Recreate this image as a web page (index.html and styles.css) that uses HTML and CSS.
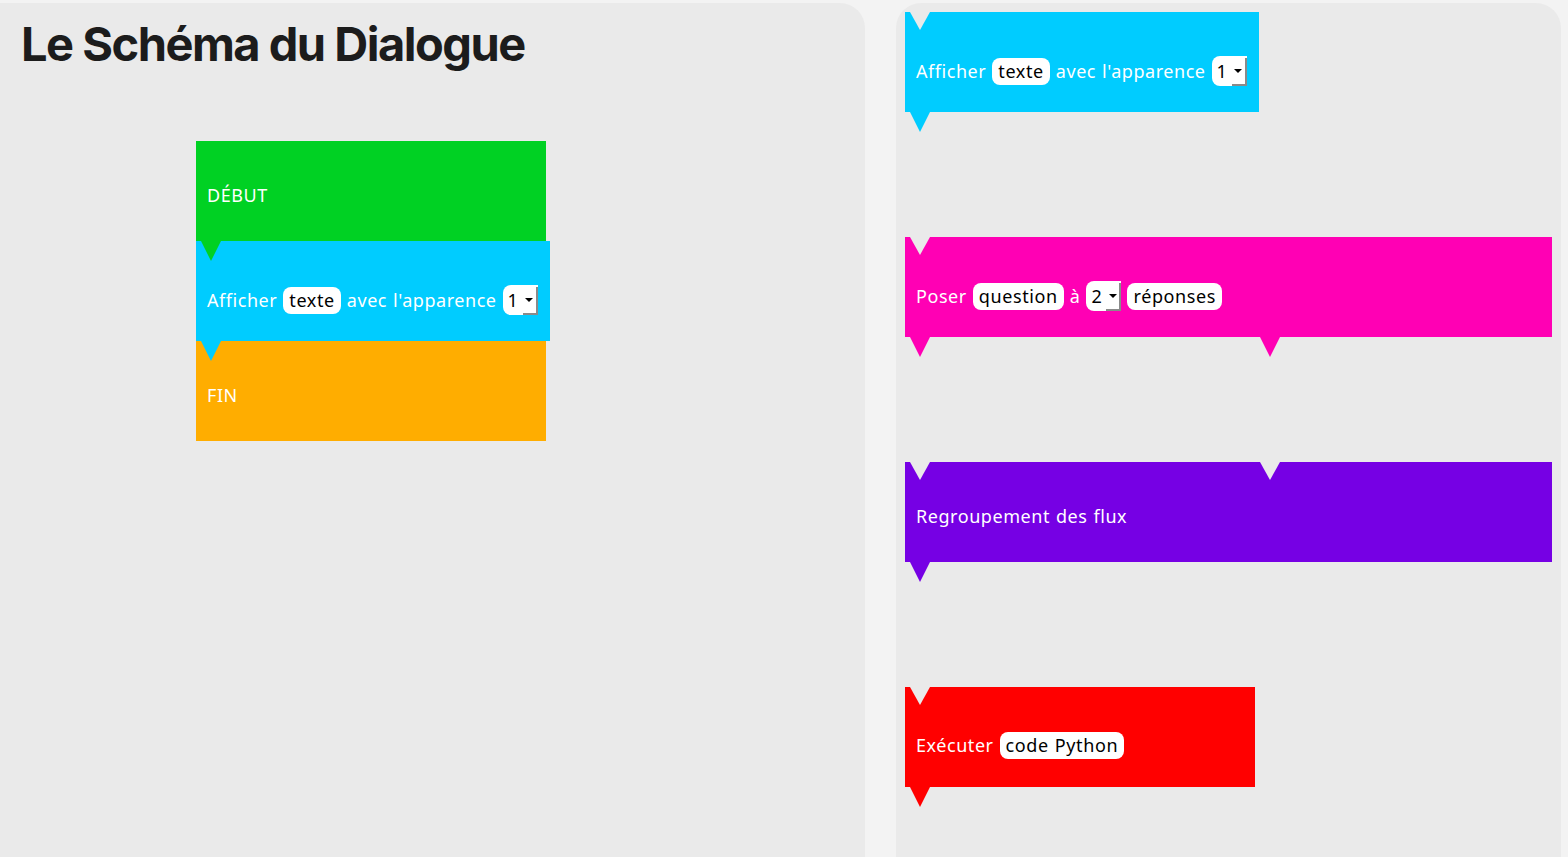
FILE: index.html
```html
<!DOCTYPE html>
<html lang="fr">
<head>
<meta charset="utf-8">
<title>Le Schéma du Dialogue</title>
<link rel="stylesheet" href="styles.css">
</head>
<body>
<div class="page">
  <section class="panel panel-left">
    <h1 class="title">Le Schéma du Dialogue</h1>
    <div class="stack">
      <div class="block green plain w350"><span class="line">DÉBUT</span></div>
      <div class="block cyan inputs w354"><span class="line">Afficher <span class="pill">texte</span> avec l'apparence <span class="sel"><span class="sel-val">1</span><span class="sel-btn"><i class="arrow"></i></span></span></span></div>
      <div class="block orange plain w350 last"><span class="line">FIN</span></div>
    </div>
  </section>
  <section class="panel panel-right">
    <div class="block cyan inputs w354 first"><span class="line">Afficher <span class="pill">texte</span> avec l'apparence <span class="sel"><span class="sel-val">1</span><span class="sel-btn"><i class="arrow"></i></span></span></span></div>
    <div class="block pink inputs w647 first"><span class="line">Poser <span class="pill">question</span> à <span class="sel"><span class="sel-val">2</span><span class="sel-btn"><i class="arrow"></i></span></span> <span class="pill">réponses</span></span><span class="tab tab-2"></span></div>
    <div class="block purple plain w647 first"><span class="line">Regroupement des flux</span><span class="notch notch-2"></span></div>
    <div class="block red inputs w350 first"><span class="line">Exécuter <span class="pill">code Python</span></span></div>
  </section>
</div>
</body>
</html>
```

FILE: styles.css
```css
html, body {
  margin: 0;
  padding: 0;
}
body {
  background: #f3f3f3;
  font-family: "Noto Sans", "Open Sans", sans-serif;
  height: 857px;
  overflow: hidden;
}
.page {
  display: flex;
  padding-top: 3px;
  height: 854px;
}
.panel {
  background: #eaeaea;
  box-sizing: border-box;
  height: 100%;
}
.panel-left {
  width: 865px;
  border-radius: 0 25px 0 0;
}
.panel-right {
  width: 665px;
  margin-left: 31px;
  border-radius: 25px 25px 0 0;
  padding: 9px 0 0 9px;
  display: flex;
  flex-direction: column;
  gap: 125px;
}
.title {
  margin: 0;
  padding: 13px 0 0 21px;
  font-family: "Inter", sans-serif;
  font-weight: 700;
  font-size: 47px;
  letter-spacing: -1.5px;
  line-height: 56px;
  color: #1c1c1c;
}
.stack {
  margin: 69px 0 0 196px;
  display: flex;
  flex-direction: column;
  align-items: flex-start;
}
.block {
  position: relative;
  box-sizing: border-box;
  height: 100px;
  padding-left: 11px;
  display: flex;
  align-items: center;
  color: #fff;
  font-size: 18px;
  letter-spacing: 0.55px;
  word-spacing: 0.8px;
  white-space: nowrap;
}
.line {
  display: block;
  line-height: 30px;
}
.block.plain { padding-top: 8px; }
.block.inputs { padding-top: 18px; }
.block.red.inputs { padding-top: 15px; }
.w350 { width: 350px; }
.w354 { width: 354px; }
.w647 { width: 647px; }
.green { background: #00d123; }
.cyan { background: #00ccff; }
.orange { background: #ffad00; }
.pink { background: #ff00b4; }
.purple { background: #7600e4; }
.red { background: #ff0000; }

.block::after, .tab {
  content: "";
  position: absolute;
  left: 5px;
  top: 100%;
  width: 20px;
  height: 20px;
  background: inherit;
  clip-path: polygon(0 0, 100% 0, 50% 100%);
  z-index: 2;
}
.block.last::after { display: none; }
.block.first::before, .notch {
  content: "";
  position: absolute;
  left: 5px;
  top: 0;
  width: 20px;
  height: 18px;
  background: #eaeaea;
  clip-path: polygon(0 0, 100% 0, 50% 100%);
  z-index: 1;
}
.tab-2, .notch-2 { left: 355px; }
.tab-2 { background: #ff00b4; }

.pill {
  display: inline-block;
  vertical-align: baseline;
  background: #fff;
  color: #000;
  border-radius: 8px;
  padding: 0 6px;
  line-height: 27px;
  height: 27px;
  letter-spacing: 0.6px;
}
.sel {
  display: inline-flex;
  vertical-align: baseline;
  height: 30px;
  background: #fff;
  border-radius: 8px 0 0 8px;
  color: #000;
}
.sel-val {
  padding-left: 5px;
  width: 15px;
  line-height: 30px;
}
.sel-btn {
  width: 15px;
  box-sizing: border-box;
  margin-top: 2px;
  border-right: 2px solid #8a8a8a;
  border-bottom: 2px solid #8a8a8a;
  display: flex;
  align-items: center;
  justify-content: center;
}
.arrow {
  width: 0;
  height: 0;
  border-left: 4px solid transparent;
  border-right: 4px solid transparent;
  border-top: 4px solid #000;
}
```
